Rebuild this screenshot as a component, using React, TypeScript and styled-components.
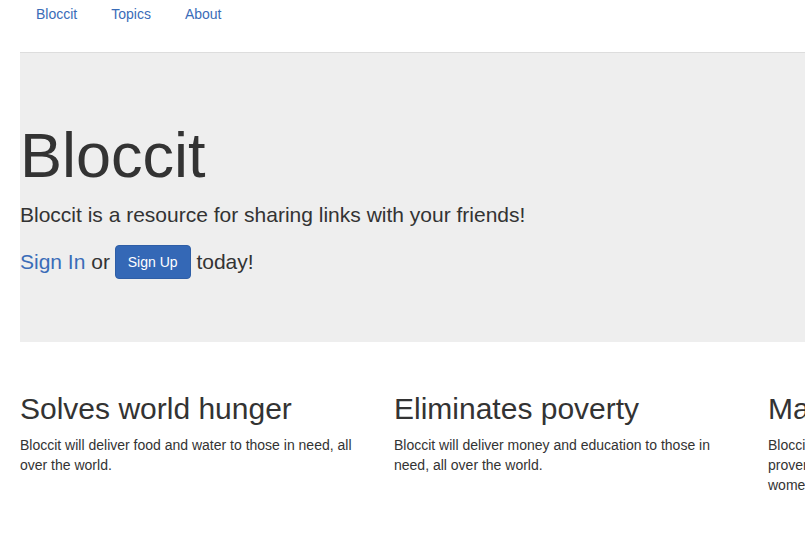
import React from "react";
import styled, { createGlobalStyle } from "styled-components";

const GlobalStyle = createGlobalStyle`
  html, body {
    margin: 0;
    padding: 0;
    background: #fff;
    overflow-x: hidden;
  }
  body {
    font-family: "Liberation Sans", Arial, Helvetica, sans-serif;
    font-size: 14px;
    line-height: 1.42857143;
    color: #333;
  }
  * { box-sizing: border-box; }
`;

const Page = styled.div`
  width: 1160px;
  padding-left: 20px;
`;

const NavList = styled.ul`
  display: flex;
  list-style: none;
  margin: 0;
  padding: 4px 0 0 1px;
  height: 53px;
  border-bottom: 1px solid #ddd;
`;

const NavItem = styled.li`
  margin-right: 4px;
`;

const NavLink = styled.a`
  display: block;
  padding: 0 15px;
  line-height: 20px;
  color: #3a6cb8;
  text-decoration: none;
`;

const Jumbotron = styled.section`
  background: #eee;
  padding: 48px 0;
  margin-bottom: 30px;
`;

const Title = styled.h1`
  margin: 20px 0 10px;
  font-size: 63px;
  font-weight: 500;
  line-height: 1.1;
  color: #333;
`;

const Lead = styled.p`
  margin: 0 0 15px;
  font-size: 21px;
  font-weight: 200;
  line-height: 30px;
`;

const LeadLink = styled.a`
  color: #3a6cb8;
  text-decoration: none;
`;

const PrimaryButton = styled.a`
  display: inline-block;
  padding: 6px 12px;
  margin-left: -1px;
  font-size: 14px;
  line-height: 20px;
  color: #fff;
  background: #3468b6;
  border: 1px solid #2e5ea6;
  border-radius: 4px;
  text-decoration: none;
  vertical-align: 2px;
`;

const Features = styled.div`
  display: grid;
  grid-template-columns: repeat(3, 344px);
  column-gap: 30px;
`;

const Feature = styled.div``;

const FeatureTitle = styled.h2`
  margin: 20px 0 10px;
  font-size: 30px;
  font-weight: 500;
  line-height: 1.1;
  color: #333;
`;

const FeatureText = styled.p`
  margin: 0 0 10px;
  font-size: 14px;
  line-height: 20px;
`;

const features = [
  {
    title: "Solves world hunger",
    text: "Bloccit will deliver food and water to those in need, all over the world.",
  },
  {
    title: "Eliminates poverty",
    text: "Bloccit will deliver money and education to those in need, all over the world.",
  },
  {
    title: "Makes the world equal",
    text: "Bloccit will deliver equal pay and opportunity through proven education and mentoring programs for girls and women all over the world.",
  },
];

export default function App() {
  return (
    <>
      <GlobalStyle />
      <Page>
        <NavList>
          <NavItem><NavLink href="#">Bloccit</NavLink></NavItem>
          <NavItem><NavLink href="#">Topics</NavLink></NavItem>
          <NavItem><NavLink href="#">About</NavLink></NavItem>
        </NavList>
        <Jumbotron>
          <Title>Bloccit</Title>
          <Lead>Bloccit is a resource for sharing links with your friends!</Lead>
          <Lead>
            <LeadLink href="#">Sign In</LeadLink> or <PrimaryButton href="#">Sign Up</PrimaryButton> today!
          </Lead>
        </Jumbotron>
        <Features>
          {features.map((f) => (
            <Feature key={f.title}>
              <FeatureTitle>{f.title}</FeatureTitle>
              <FeatureText>{f.text}</FeatureText>
            </Feature>
          ))}
        </Features>
      </Page>
    </>
  );
}
